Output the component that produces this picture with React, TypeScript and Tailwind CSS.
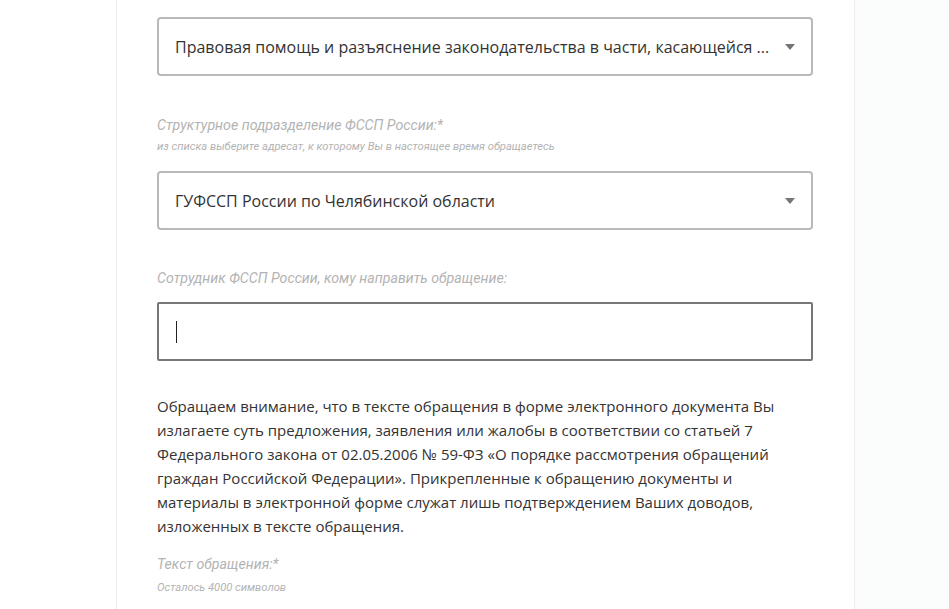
function Caret() {
  return (
    <svg width="10" height="6" viewBox="0 0 10 6" className="shrink-0">
      <path d="M0 0 L10 0 L5 6 Z" fill="#757575" />
    </svg>
  )
}

function SelectBox({ value }: { value: string }) {
  return (
    <div className="flex h-[59px] items-center justify-between rounded-[4px] border-2 border-[#b9b9b9] pl-[16px] pr-[16px] bg-white">
      <span className="truncate text-[16px] text-[#333] font-['Open_Sans',sans-serif]">{value}</span>
      <Caret />
    </div>
  )
}

function Label({ text, hint, gap = 'mt-[6px]' }: { text: string; hint?: string; gap?: string }) {
  return (
    <div className="font-['Roboto',sans-serif] italic text-[#b3b3b3]">
      <p className="text-[14.2px] leading-[18px]">{text}</p>
      {hint && <p className={`${gap} text-[11.2px] leading-[14px]`}>{hint}</p>}
    </div>
  )
}

export default function App() {
  return (
    <div className="min-h-[609px] bg-white flex">
      <div className="w-[739px] ml-[116px] border-x border-[#ececec] bg-white pl-[40px] pr-[41px] pt-[17px] pb-[20px]">
        <SelectBox value="Правовая помощь и разъяснение законодательства в части, касающейся ..." />

        <div className="mt-[40px]">
          <Label
            text="Структурное подразделение ФССП России:*"
            hint="из списка выберите адресат, к которому Вы в настоящее время обращаетесь"
          />
        </div>

        <div className="mt-[17px]">
          <SelectBox value="ГУФССП России по Челябинской области" />
        </div>

        <div className="mt-[39px]">
          <Label text="Сотрудник ФССП России, кому направить обращение:" />
        </div>

        <div className="mt-[15px] flex h-[59px] items-center border-2 border-[#777] rounded-[2px] pl-[17px]">
          <span className="block h-[22px] w-px bg-[#222]" />
        </div>

        <p className="mt-[33px] max-w-[630px] text-[15px] leading-[24px] text-[#333] font-['Open_Sans',sans-serif]">
          Обращаем внимание, что в тексте обращения в форме электронного документа Вы излагаете суть предложения,
          заявления или жалобы в соответствии со статьей 7 Федерального закона от 02.05.2006 № 59-ФЗ «О порядке
          рассмотрения обращений граждан Российской Федерации». Прикрепленные к обращению документы и материалы в
          электронной форме служат лишь подтверждением Ваших доводов, изложенных в тексте обращения.
        </p>

        <div className="mt-[17px]">
          <Label text="Текст обращения:*" hint="Осталось 4000 символов" gap="mt-[8px]" />
        </div>
      </div>
      <div className="flex-1 bg-[#fbfcfc]" />
    </div>
  )
}
